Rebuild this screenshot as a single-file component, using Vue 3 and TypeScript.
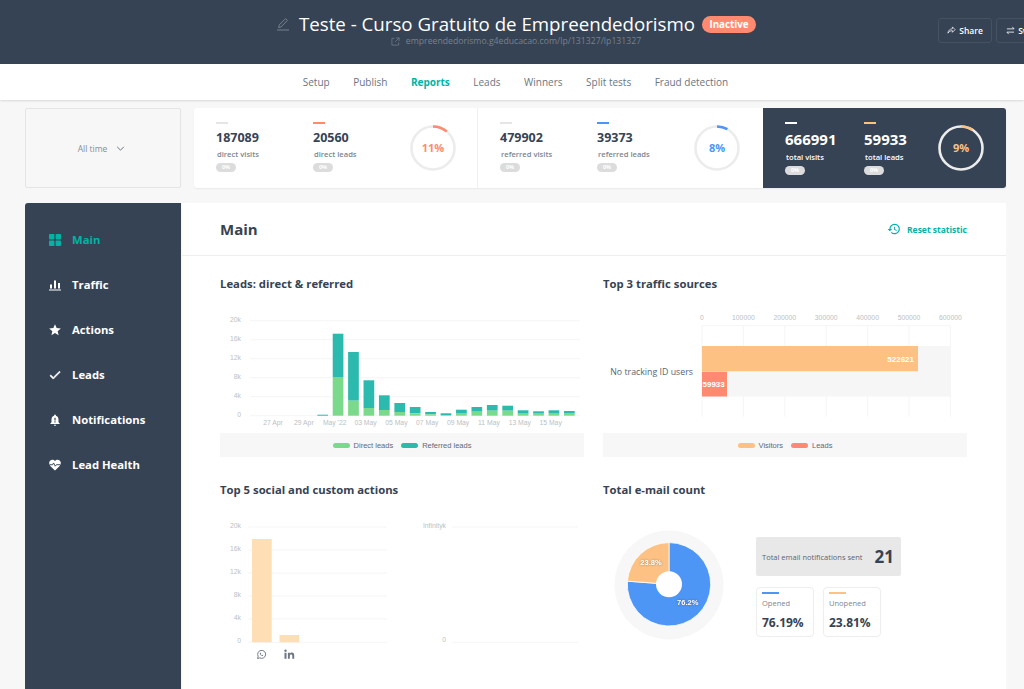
<script setup lang="ts">
interface Bar { x: number; top: number; mid: number }
const tops: [number, number][] = [
  [333.7, 377], [352, 400.7], [380.3, 408], [395.3, 410], [403, 412], [407, 413.3],
  [412, 414.3], [413.3, 415], [409.7, 413], [407, 411.7], [405, 410.7], [405.7, 410.7],
  [410.3, 413.7], [411.3, 413.7], [410.3, 413], [411, 413]
]
const leadBars: Bar[] = tops.map((t, i) => ({ x: 332.7 + i * 15.42, top: t[0], mid: t[1] }))
const base = 415.7
const leadGrid = [
  { y: 320.7, t: '20k' }, { y: 339.7, t: '16k' }, { y: 358.7, t: '12k' },
  { y: 377.7, t: '8k' }, { y: 396.7, t: '4k' }, { y: 415.7, t: '0' }
]
const leadDates = ['27 Apr', '29 Apr', "May '22", '03 May', '05 May', '07 May', '09 May', '11 May', '13 May', '15 May']
  .map((t, i) => ({ t, x: 273 + i * 30.85 }))
const trafficAxis = ['0', '100000', '200000', '300000', '400000', '500000', '600000']
  .map((t, i) => ({ t, x: 702 + i * 41.4 }))
const actionGrid = [
  { y: 527, t: '20k' }, { y: 550, t: '16k' }, { y: 573, t: '12k' },
  { y: 596, t: '8k' }, { y: 619, t: '4k' }, { y: 642.3, t: '0' }
]
const cx = 669, cy = 584.3, r = 41.7
const a = 0.762 * 2 * Math.PI
const ex = cx + r * Math.sin(a), ey = cy - r * Math.cos(a)
const bluePath = `M${cx} ${cy}L${cx} ${cy - r}A${r} ${r} 0 1 1 ${ex} ${ey}Z`
const orangePath = `M${cx} ${cy}L${ex} ${ey}A${r} ${r} 0 0 1 ${cx} ${cy - r}Z`
const menu = ['Setup', 'Publish', 'Reports', 'Leads', 'Winners', 'Split tests', 'Fraud detection']
const ring = (pct: number, rad: number) => {
  const c = 2 * Math.PI * rad
  return `${(c * pct) / 100} ${c}`
}
</script>

<template>
  <div class="page">
    <header class="header">
      <div class="titlebox">
        <div class="titleline">
          <svg class="edit" viewBox="0 0 14 14" width="14" height="14">
            <path d="M9.6 1.6l1.8 1.8L5 10l-2.4.6L3.2 8z" fill="none" stroke="#77818e" stroke-width="1" />
            <path d="M1 13h12" stroke="#77818e" stroke-width="1" />
          </svg>
          <h1>Teste - Curso Gratuito de Empreendedorismo</h1>
          <span class="badge">Inactive</span>
        </div>
        <div class="url">
          <svg viewBox="0 0 10 10" width="9" height="9">
            <path d="M4 1.5H1v7.5h7.5V6M5.5 1H9v3.5M9 1L4.5 5.5" fill="none" stroke="#77818e" stroke-width="0.8" />
          </svg>
          <span>empreendedorismo.g4educacao.com/lp/131327/lp131327</span>
        </div>
      </div>
      <div class="actions">
        <button class="btn">
          <svg viewBox="0 0 10 10" width="9" height="9">
            <path d="M6 1l3 3-3 3V5.2C3.8 5.2 2.3 6 1 8c.3-2.8 2-4.6 5-5z" fill="none" stroke="#fff" stroke-width="0.8" />
          </svg>
          Share
        </button>
        <button class="btn">
          <svg viewBox="0 0 10 10" width="9" height="9">
            <path d="M1 3.2h8M7 1l2 2.2M9 6.8H1M3 9L1 6.8" fill="none" stroke="#fff" stroke-width="0.9" />
          </svg>
          Swap
        </button>
      </div>
    </header>

    <nav class="nav">
      <a v-for="m in menu" :key="m" :class="{ active: m === 'Reports' }">{{ m }}</a>
    </nav>

    <section class="stats">
      <div class="period">
        <span>All time</span>
        <svg viewBox="0 0 10 6" width="9" height="5">
          <path d="M1 1l4 4 4-4" fill="none" stroke="#5f6a78" stroke-width="1.1" />
        </svg>
      </div>
      <div class="summary">
        <div class="block b1">
          <div class="col">
            <i class="tick grey"></i><b>187089</b><small>direct visits</small><em>0%</em>
          </div>
          <div class="col">
            <i class="tick red"></i><b>20560</b><small>direct leads</small><em>0%</em>
          </div>
          <svg class="ring" viewBox="0 0 46 46" width="46" height="46">
            <circle cx="23" cy="23" r="21.5" fill="none" stroke="#ececec" stroke-width="2.6" />
            <circle cx="23" cy="23" r="21.5" fill="none" stroke="#ff8a70" stroke-width="2.6"
              :stroke-dasharray="ring(11, 21.5)" transform="rotate(-90 23 23)" />
            <text x="23" y="27" text-anchor="middle" class="ringtext" fill="#ff8a70">11%</text>
          </svg>
        </div>
        <div class="block b2">
          <div class="col">
            <i class="tick grey"></i><b>479902</b><small>referred visits</small><em>0%</em>
          </div>
          <div class="col">
            <i class="tick blue"></i><b>39373</b><small>referred leads</small><em>0%</em>
          </div>
          <svg class="ring" viewBox="0 0 46 46" width="46" height="46">
            <circle cx="23" cy="23" r="21.5" fill="none" stroke="#ececec" stroke-width="2.6" />
            <circle cx="23" cy="23" r="21.5" fill="none" stroke="#4d96f5" stroke-width="2.6"
              :stroke-dasharray="ring(8, 21.5)" transform="rotate(-90 23 23)" />
            <text x="23" y="27" text-anchor="middle" class="ringtext" fill="#4d96f5">8%</text>
          </svg>
        </div>
        <div class="block b3">
          <div class="col">
            <i class="tick white"></i><b>666991</b><small>total visits</small><em>0%</em>
          </div>
          <div class="col">
            <i class="tick orange"></i><b>59933</b><small>total leads</small><em>0%</em>
          </div>
          <svg class="ring" viewBox="0 0 46 46" width="46" height="46">
            <circle cx="23" cy="23" r="21.5" fill="none" stroke="#ececec" stroke-width="2.6" />
            <circle cx="23" cy="23" r="21.5" fill="none" stroke="#fdc183" stroke-width="2.6"
              :stroke-dasharray="ring(9, 21.5)" transform="rotate(-90 23 23)" />
            <text x="23" y="27" text-anchor="middle" class="ringtext" fill="#fdc183">9%</text>
          </svg>
        </div>
      </div>
    </section>

    <main class="main">
      <aside class="side">
        <a class="item on">
          <svg viewBox="0 0 14 14" width="14" height="14" fill="currentColor">
            <rect x="1" y="1" width="5.4" height="5.4" rx="0.8" /><rect x="7.6" y="1" width="5.4" height="5.4" rx="0.8" />
            <rect x="1" y="7.6" width="5.4" height="5.4" rx="0.8" /><rect x="7.6" y="7.6" width="5.4" height="5.4" rx="0.8" />
          </svg>
          Main
        </a>
        <a class="item">
          <svg viewBox="0 0 14 14" width="14" height="14" fill="currentColor">
            <rect x="2" y="6.5" width="2" height="4" /><rect x="6" y="2.5" width="2" height="8" /><rect x="10" y="5" width="2" height="5.5" />
            <rect x="1" y="11.5" width="12" height="1" />
          </svg>
          Traffic
        </a>
        <a class="item">
          <svg viewBox="0 0 24 24" width="14" height="14" fill="currentColor">
            <path d="M12 17.27L18.18 21l-1.64-7.03L22 9.24l-7.19-.61L12 2 9.19 8.63 2 9.24l5.46 4.73L5.82 21z" />
          </svg>
          Actions
        </a>
        <a class="item">
          <svg viewBox="0 0 24 24" width="14" height="14" fill="currentColor">
            <path d="M9 16.17L4.83 12l-1.42 1.41L9 19 21 7l-1.41-1.41z" stroke="currentColor" stroke-width="1.2" />
          </svg>
          Leads
        </a>
        <a class="item">
          <svg viewBox="0 0 24 24" width="14" height="14" fill="currentColor">
            <path d="M12 22c1.1 0 2-.9 2-2h-4c0 1.1.9 2 2 2zm6-6v-5c0-3.07-1.63-5.64-4.5-6.32V4c0-.83-.67-1.5-1.5-1.5s-1.5.67-1.5 1.5v.68C7.64 5.36 6 7.92 6 11v5l-2 2v1h16v-1l-2-2z" />
            <path d="M11 8h2v5h-2zM11 14.2h2v2h-2z" fill="#364354" />
          </svg>
          Notifications
        </a>
        <a class="item">
          <svg viewBox="0 0 24 24" width="14" height="14" fill="currentColor">
            <path d="M12 21.3l-1.5-1.3C5.4 15.4 2 12.300 2 8.500 2 5.400 4.400 3 7.500 3c1.700 0 3.400.8 4.500 2.100C13.100 3.800 14.800 3 16.500 3 19.600 3 22 5.400 22 8.500c0 3.800-3.400 6.900-8.500 11.500z" />
            <path d="M3 11.500h5l1.500-3 3 5.500 1.800-2.500H21" fill="none" stroke="#364354" stroke-width="1.600" />
          </svg>
          Lead Health
        </a>
      </aside>

      <div class="content">
        <div class="top">
          <h2>Main</h2>
          <a class="reset">
            <svg viewBox="0 0 24 24" width="14" height="14" fill="currentColor">
              <path d="M13 3a9 9 0 0 0-9 9H1l3.900 3.900L9 12H6a7 7 0 1 1 2.050 4.950L6.640 18.360A9 9 0 1 0 13 3zm-1 5v5l4.250 2.520.770-1.280-3.520-2.090V8z" />
            </svg>
            Reset statistic
          </a>
        </div>

        <div class="grid">
          <section class="panel">
            <h3>Leads: direct &amp; referred</h3>
            <svg class="chart" viewBox="220 300 364 133" width="364" height="133">
              <g v-for="g in leadGrid" :key="g.t">
                <line x1="250" x2="580" :y1="g.y" :y2="g.y" stroke="#f5f5f5" />
                <text x="241" :y="g.y + 1" text-anchor="end" class="tick-label">{{ g.t }}</text>
              </g>
              <rect x="317.300" y="414.700" width="10.700" height="1" fill="#2cb9ae" />
              <g v-for="b in leadBars" :key="b.x">
                <rect :x="b.x" :y="b.top" width="10.700" :height="b.mid - b.top" fill="#2cb9ae" />
                <rect :x="b.x" :y="b.mid" width="10.700" :height="base - b.mid" fill="#7ad98a" />
              </g>
              <text v-for="d in leadDates" :key="d.t" :x="d.x" y="425" text-anchor="middle" class="tick-label">{{ d.t }}</text>
            </svg>
            <div class="legend">
              <i class="dot green"></i><span>Direct leads</span>
              <i class="dot teal"></i><span>Referred leads</span>
            </div>
          </section>

          <section class="panel">
            <h3>Top 3 traffic sources</h3>
            <svg class="chart" viewBox="603 300 364 133" width="364" height="133">
              <g v-for="t in trafficAxis" :key="t.t">
                <line :x1="t.x" :x2="t.x" y1="325.700" y2="416.700" stroke="#f5f5f5" />
                <text :x="t.x" y="320" text-anchor="middle" class="tick-label">{{ t.t }}</text>
              </g>
              <line x1="702" x2="950" y1="325.700" y2="325.700" stroke="#f5f5f5" />
              <rect x="702" y="346" width="248" height="50.500" fill="#f6f6f6" />
              <rect x="702" y="346" width="216" height="25.300" fill="#fdc183" />
              <rect x="702" y="371.700" width="25" height="24.800" fill="#ff8a70" />
              <text x="914" y="361.500" text-anchor="end" class="bar-label">522621</text>
              <text x="702.500" y="386.500" class="bar-label">59933</text>
              <text x="693" y="375" text-anchor="end" class="source">No tracking ID users</text>
            </svg>
            <div class="legend">
              <i class="dot peach"></i><span>Visitors</span>
              <i class="dot coral"></i><span>Leads</span>
            </div>
          </section>

          <section class="panel">
            <h3>Top 5 social and custom actions</h3>
            <svg class="chart" viewBox="220 506 364 170" width="364" height="170">
              <g v-for="g in actionGrid" :key="g.t">
                <line x1="248" x2="387" :y1="g.y" :y2="g.y" stroke="#f5f5f5" />
                <text x="241" :y="g.y + 1" text-anchor="end" class="tick-label">{{ g.t }}</text>
              </g>
              <rect x="252" y="539" width="19.700" height="103.300" fill="#fedfb5" />
              <rect x="279.500" y="635" width="19.700" height="7.300" fill="#fedfb5" />
              <g transform="translate(256.500 649.500) scale(0.42)">
                <path d="M2.500 21.500l1.500-5.300A9.500 9.500 0 1 1 7.800 19.900z" fill="none" stroke="#6d7683" stroke-width="2.300" />
                <path d="M8.500 7.500c-.8.900-.9 2.300 0 3.900 1.100 1.900 2.600 3.100 4.400 3.800 1.300.5 2.500-.1 3-1.200l-2-1.300-1 .9c-1-.4-2-1.400-2.500-2.500l.8-1-1.100-2.500z" fill="#6d7683" />
              </g>
              <g transform="translate(284.500 649.500)" fill="#6d7683">
                <rect x="0" y="3.300" width="2" height="6" />
                <circle cx="1" cy="1.300" r="1.200" />
                <path d="M3.400 3.300h1.900v.9c.4-.6 1.100-1.100 2-1.100 1.900 0 2.400 1.200 2.400 2.900v3.300H7.800V6.400c0-.8-.2-1.500-1.100-1.500-.9 0-1.400.6-1.400 1.500v2.900H3.400z" />
              </g>
              <text x="446" y="527.500" text-anchor="end" class="tick-label">Infinityk</text>
              <line x1="451.700" x2="578" y1="527" y2="527" stroke="#f5f5f5" />
              <text x="446" y="642" text-anchor="end" class="tick-label">0</text>
              <line x1="451.700" x2="578" y1="642.300" y2="642.300" stroke="#f5f5f5" />
            </svg>
          </section>

          <section class="panel">
            <h3>Total e-mail count</h3>
            <div class="mail">
              <svg class="donut" viewBox="603 506 153 170" width="153" height="170">
                <circle cx="669" cy="585" r="54.500" fill="#f7f7f7" />
                <path :d="bluePath" fill="#4d96f5" stroke="#fff" stroke-width="0.800" />
                <path :d="orangePath" fill="#fdc183" stroke="#fff" stroke-width="0.800" />
                <circle :cx="cx" :cy="cy" r="13" fill="#fff" />
                <text x="687.700" y="604.500" text-anchor="middle" class="pie-label">76.2%</text>
                <text x="651" y="564.500" text-anchor="middle" class="pie-label">23.8%</text>
              </svg>
              <div class="mailinfo">
                <div class="sent">
                  <span>Total email notifications sent</span>
                  <b>21</b>
                </div>
                <div class="mailcards">
                  <div class="mailcard">
                    <i class="tick blue"></i><span>Opened</span><b>76.19%</b>
                  </div>
                  <div class="mailcard">
                    <i class="tick orange"></i><span>Unopened</span><b>23.81%</b>
                  </div>
                </div>
              </div>
            </div>
          </section>
        </div>
      </div>
    </main>
  </div>
</template>

<style>
html, body { margin: 0; background: #f7f7f7; overflow: hidden; }
</style>

<style scoped>
.page {
  width: 1024px;
  height: 689px;
  overflow: hidden;
  background: #f7f7f7;
  font-family: "Open Sans", sans-serif;
  color: #364354;
}
.header {
  height: 64px;
  background: #364354;
  display: flex;
  align-items: flex-start;
  padding-left: 276px;
  box-sizing: border-box;
}
.edit { margin-right: 9px; flex: none; }
.titlebox { flex: none; display: flex; flex-direction: column; align-items: center; padding-top: 13px; }
.titleline { display: flex; align-items: center; }
h1 { margin: 0 7px 0 0; font-size: 18.700px; line-height: 22px; font-weight: 400; color: #fff; white-space: nowrap; }
.badge {
  background: #ff8a70;
  color: #fff;
  font-size: 9.800px;
  font-weight: 700;
  line-height: 17px;
  height: 17px;
  width: 54px;
  text-align: center;
  border-radius: 9px;
}
.url { display: flex; align-items: center; gap: 6px; font-size: 8.700px; line-height: 13px; color: #77818e; }
.actions { display: flex; gap: 4px; margin: 18px 0 0 182px; flex: none; }
.btn {
  display: flex;
  align-items: center;
  gap: 3px;
  height: 25px;
  width: 54px;
  flex: none;
  justify-content: center;
  box-sizing: border-box;
  background: transparent;
  border: 1px solid #46525f;
  border-radius: 3px;
  color: #fff;
  font: 600 8.500px "Open Sans", sans-serif;
}
.nav {
  height: 36px;
  background: #fff;
  box-shadow: 0 1px 2px rgba(0, 0, 0, 0.12);
  display: flex;
  justify-content: center;
  align-items: center;
  gap: 23.500px;
  padding-left: 7px;
  box-sizing: border-box;
  font-size: 10px;
  color: #6b7582;
  position: relative;
}
.nav .active { color: #00b3a4; font-weight: 700; }
.stats { display: flex; gap: 13px; margin: 8px 18px 0 25px; height: 80px; }
.period {
  width: 156px;
  box-sizing: border-box;
  background: #f7f7f7;
  border: 1px solid #e4e4e4;
  border-radius: 2px;
  display: flex;
  align-items: center;
  justify-content: center;
  gap: 9px;
  font-size: 8.500px;
  color: #868e99;
  padding-right: 3px;
}
.summary { flex: 1; display: flex; background: #fff; border-radius: 3px; box-shadow: 0 1px 2px rgba(0, 0, 0, 0.06); overflow: hidden; }
.block { display: flex; box-sizing: border-box; padding-top: 14px; position: relative; }
.b1 { width: 284px; padding-left: 22px; border-right: 1px solid #f0f0f0; }
.b2 { width: 285px; padding-left: 22px; }
.b3 { flex: 1; padding-left: 22px; background: #364354; color: #fff; }
.col { width: 97px; display: flex; flex-direction: column; align-items: flex-start; }
.b3 .col { width: 79px; }
.b3 .col + .col { width: 74px; }
.tick { display: block; width: 12px; height: 1.500px; background: #e5e5e5; }
.tick.red { background: #ff8a70; }
.tick.blue { background: #4d96f5; }
.tick.white { background: #fff; }
.tick.orange { background: #fdc183; }
.col b { font-size: 12.500px; line-height: 16px; margin-top: 6px; font-weight: 700; }
.b3 .col b { font-size: 15px; line-height: 18px; }
.col small { font-size: 7.600px; line-height: 12px; margin-top: 2px; margin-left: 1px; color: #7d8692; font-weight: 600; }
.b3 .col small { color: #fff; margin-top: 3px; }
.col em {
  margin-top: 3.500px;
  width: 20px;
  height: 9px;
  border-radius: 5px;
  background: #dcdcdc;
  color: #fff;
  font-style: normal;
  font-weight: 700;
  font-size: 5.500px;
  line-height: 9px;
  text-align: center;
}
.ring { margin-top: 3px; flex: none; }
.ringtext { font-size: 11px; font-weight: 700; }
.main { display: flex; height: 486px; margin: 15px 18px 0 25px; }
.side {
  width: 156px;
  background: #364354;
  border-radius: 3px 0 0 0;
  padding: 14px 0 0 23px;
  box-sizing: border-box;
  flex: none;
  display: flex;
  flex-direction: column;
}
.item {
  height: 45px;
  display: flex;
  align-items: center;
  gap: 10px;
  font-size: 11.300px;
  font-weight: 700;
  color: #fff;
}
.item.on { color: #00b3a4; }
.content { flex: 1; background: #fff; margin-left: 1px; }
.top {
  height: 53px;
  box-sizing: border-box;
  border-bottom: 1px solid #eee;
  display: flex;
  align-items: center;
  justify-content: space-between;
  padding: 0 39px 0 38px;
}
h2 { margin: 0; font-size: 15px; font-weight: 700; }
.reset { display: flex; align-items: center; gap: 6px; color: #00b3a4; font-size: 8.500px; font-weight: 700; }
.grid {
  display: grid;
  grid-template-columns: 364px 364px;
  column-gap: 19px;
  row-gap: 25px;
  padding: 20px 0 0 38px;
}
h3 { margin: 0 0 8px; font-size: 11.300px; line-height: 16px; font-weight: 700; }
.chart { display: block; }
.tick-label { font: 6.800px "Liberation Sans", sans-serif; fill: #bbbfc4; }
.bar-label { font: 700 8px "Liberation Sans", sans-serif; fill: #fff; }
.source { font: 8.800px "Open Sans", sans-serif; fill: #5a6573; }
.pie-label { font: 700 7.500px "Liberation Sans", sans-serif; fill: #fff; filter: drop-shadow(0 0 1px rgba(0, 0, 0, 0.35)); }
.legend {
  height: 24px;
  background: #f7f7f7;
  display: flex;
  align-items: center;
  justify-content: center;
  gap: 4px;
  font: 7.500px "Liberation Sans", sans-serif;
  color: #5f6a78;
}
.legend span + .dot { margin-left: 4px; }
.dot { width: 17px; height: 5px; border-radius: 3px; display: block; }
.dot.green { background: #7ad98a; }
.dot.teal { background: #2cb9ae; }
.dot.peach { background: #fdc183; }
.dot.coral { background: #ff8a70; }
.mail { display: flex; align-items: flex-start; }
.donut { flex: none; display: block; }
.mailinfo { padding-top: 31px; }
.sent {
  width: 145px;
  height: 39px;
  box-sizing: border-box;
  padding: 0 7px 0 6px;
  background: #e8e8e8;
  border-radius: 2px;
  display: flex;
  align-items: center;
  justify-content: space-between;
  font-size: 7.500px;
  color: #5a6573;
}
.sent b { font-size: 17px; font-weight: 700; color: #364354; }
.mailcards { display: flex; gap: 9px; margin-top: 11px; }
.mailcard {
  width: 58px;
  height: 50px;
  box-sizing: border-box;
  border: 1px solid #eee;
  border-radius: 4px;
  padding: 4px 5px;
  display: flex;
  flex-direction: column;
  font-size: 7.500px;
  color: #7d8692;
}
.mailcard .tick { width: 17px; }
.mailcard span { margin-top: 4px; line-height: 10px; }
.mailcard b { margin-top: 7px; font-size: 12px; line-height: 16px; color: #364354; font-weight: 700; }
</style>
